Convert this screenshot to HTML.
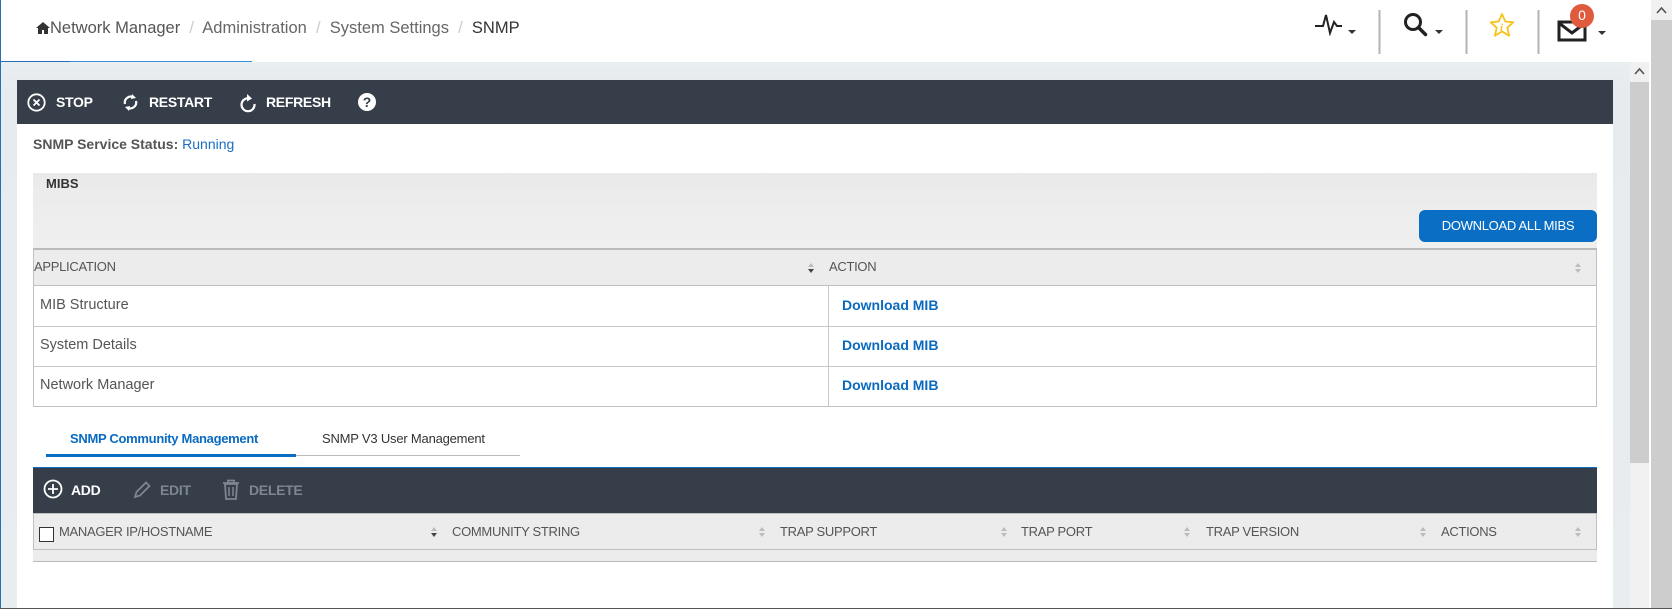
<!DOCTYPE html>
<html><head><meta charset="utf-8"><style>
*{margin:0;padding:0;box-sizing:border-box}
body{width:1672px;height:609px;overflow:hidden;background:#fff;font-family:"Liberation Sans",sans-serif;position:relative;color:#555}
.a{position:absolute;white-space:nowrap}
.tb{color:#fff;font-weight:bold;font-size:14px;letter-spacing:-0.3px}
.th{font-size:13px;color:#555;letter-spacing:-0.3px}
.srt{position:absolute;width:7px;height:10px}
.srt:before{content:"";position:absolute;left:0;top:0;border-left:3.5px solid transparent;border-right:3.5px solid transparent;border-bottom:4px solid #bbb}
.srt:after{content:"";position:absolute;left:0;top:6px;border-left:3.5px solid transparent;border-right:3.5px solid transparent;border-top:4px solid #bbb}
.srt.d:after{border-top-color:#444}
.hl{position:absolute;left:33px;width:1564px;height:1px;background:#c8c8c8}
.dl{color:#0a6ac0;font-weight:bold;font-size:14px}
.rt{font-size:14.5px;color:#555}
</style></head><body>
<div class="a" style="left:0;top:0;width:1651px;height:61px;background:#fff"></div>
<div class="a" style="left:0;top:0;width:1px;height:609px;background:#2a6db8"></div>
<div class="a" style="left:0;top:61px;width:70px;height:1px;background:#2a6db8"></div>
<div class="a" style="left:70px;top:61px;width:182px;height:1px;background:#3d8fd8"></div>
<div class="a" style="left:36px;top:19px;font-size:16.5px;color:#666">
<svg width="14" height="12" viewBox="0 0 14 12" style="vertical-align:-1px"><path d="M7 0L0 6h2v6h4V8h2v4h4V6h2z" fill="#333"/></svg><span style="color:#555">Network Manager</span> <span style="color:#ccc">&nbsp;/&nbsp;</span> Administration <span style="color:#ccc">&nbsp;/&nbsp;</span> System Settings <span style="color:#ccc">&nbsp;/&nbsp;</span> <span style="color:#333">SNMP</span></div>
<svg class="a" style="left:1314px;top:12px" width="30" height="24" viewBox="0 0 30 24"><path d="M1 14h8l3-11 4 18 4-11 3 4h5" fill="none" stroke="#222" stroke-width="2"/></svg>
<div class="a" style="left:1348px;top:30px;border-left:4px solid transparent;border-right:4px solid transparent;border-top:4px solid #333"></div>
<div class="a" style="left:1378px;top:10px;width:3px;height:44px;background:linear-gradient(90deg,#eee,#aaa,#eee)"></div>
<svg class="a" style="left:1403px;top:12px" width="28" height="26" viewBox="0 0 28 26"><circle cx="10" cy="10" r="7.5" fill="none" stroke="#222" stroke-width="3"/><path d="M15.5 15.5l7 7" stroke="#222" stroke-width="3.5" stroke-linecap="round"/></svg>
<div class="a" style="left:1435px;top:30px;border-left:4px solid transparent;border-right:4px solid transparent;border-top:4px solid #333"></div>
<div class="a" style="left:1465px;top:10px;width:3px;height:44px;background:linear-gradient(90deg,#eee,#aaa,#eee)"></div>
<svg class="a" style="left:1489px;top:12px" width="26" height="28" viewBox="0 0 26 28"><path d="M13 2l3.3 7.5 8 .8-6 5.4 1.8 8L13 19.5 5.9 23.7l1.8-8-6-5.4 8-.8z" fill="none" stroke="#f7c21b" stroke-width="1.8" stroke-linejoin="round"/><text x="11" y="19" font-size="11" font-style="italic" font-weight="bold" fill="#f7c21b" font-family="Liberation Serif,serif">i</text></svg>
<div class="a" style="left:1537px;top:10px;width:3px;height:44px;background:linear-gradient(90deg,#eee,#aaa,#eee)"></div>
<svg class="a" style="left:1557px;top:19px" width="32" height="24" viewBox="0 0 32 24"><rect x="2" y="3" width="26" height="18" fill="none" stroke="#222" stroke-width="3"/><path d="M2 4l13 10 13-10" fill="none" stroke="#222" stroke-width="3"/></svg>
<div class="a" style="left:1570px;top:4px;width:24px;height:24px;border-radius:50%;background:#e05a3d;color:#fff;font-size:14px;text-align:center;line-height:22px">0</div>
<div class="a" style="left:1598px;top:31px;border-left:4px solid transparent;border-right:4px solid transparent;border-top:4px solid #333"></div>
<div class="a" style="left:1px;top:62px;width:1629px;height:547px;background:linear-gradient(#e9eef1,#e6ebef 30px,#e8edf0)"></div>
<div class="a" style="left:1630px;top:62px;width:19px;height:547px;background:#f0f0f0"></div>
<div class="a" style="left:1630px;top:82px;width:19px;height:381px;background:#cdcdcd"></div>
<svg class="a" style="left:1633px;top:66px" width="13" height="10"><path d="M2 8l4.5-5 4.5 5" fill="none" stroke="#555" stroke-width="1.6"/></svg>
<div class="a" style="left:1651px;top:0;width:21px;height:609px;background:#cdcdcd"></div>
<div class="a" style="left:1651px;top:0;width:21px;height:20px;background:#f0f0f0"></div>
<svg class="a" style="left:1655px;top:5px" width="13" height="10"><path d="M2 8l4.5-5 4.5 5" fill="none" stroke="#555" stroke-width="1.6"/></svg>
<div class="a" style="left:0;top:608px;width:1672px;height:1px;background:#555"></div>
<div class="a" style="left:17px;top:80px;width:1596px;height:528px;background:#fff"></div>
<div class="a" style="left:17px;top:80px;width:1596px;height:44px;background:#353e49"></div>
<svg class="a" style="left:27px;top:93px" width="19" height="19" viewBox="0 0 19 19"><circle cx="9.5" cy="9.5" r="8.2" fill="none" stroke="#fff" stroke-width="1.8"/><path d="M6.5 6.5l6 6M12.5 6.5l-6 6" stroke="#fff" stroke-width="1.8"/></svg>
<div class="a tb" style="left:56px;top:94px">STOP</div>
<svg class="a" style="left:122px;top:93px" width="17" height="19" viewBox="0 0 17 19"><path d="M3 11a6 6 0 0 1 9-6.5" fill="none" stroke="#fff" stroke-width="2.2"/><path d="M10 1l4 4-5 1z" fill="#fff"/><path d="M14 8a6 6 0 0 1-9 6.5" fill="none" stroke="#fff" stroke-width="2.2"/><path d="M7 18l-4-4 5-1z" fill="#fff"/></svg>
<div class="a tb" style="left:149px;top:94px">RESTART</div>
<svg class="a" style="left:239px;top:92px" width="18" height="21" viewBox="0 0 18 21"><path d="M11 6.5A6.5 6.5 0 1 0 15.5 12" fill="none" stroke="#fff" stroke-width="2.2"/><path d="M8 2l5 4.5-5 3z" fill="#fff"/></svg>
<div class="a tb" style="left:266px;top:94px">REFRESH</div>
<div class="a" style="left:358px;top:93px;width:18px;height:18px;border-radius:50%;background:#fff;color:#353e49;font-weight:bold;font-size:14px;text-align:center;line-height:18px">?</div>
<div class="a" style="left:33px;top:136px;font-size:14px"><b style="color:#555">SNMP Service Status:</b> <span style="color:#1a6fc4">Running</span></div>
<div class="a" style="left:33px;top:173px;width:1564px;height:75px;background:linear-gradient(#e9e9e9,#ececec 20px,#efefef)"></div>
<div class="a" style="left:46px;top:176px;font-size:13px;font-weight:bold;color:#333">MIBS</div>
<div class="a" style="left:1419px;top:210px;width:178px;height:32px;background:#0a6ec5;border-radius:6px;color:#fff;font-size:13px;text-align:center;line-height:32px;letter-spacing:-0.3px">DOWNLOAD ALL MIBS</div>
<div class="a" style="left:33px;top:248px;width:1564px;height:159px;background:#fff;border:1px solid #c0c0c0;border-top:none"></div>
<div class="a" style="left:33px;top:248px;width:1564px;height:38px;background:#ececec;border:1px solid #c0c0c0;border-top:2px solid #bbb"></div>
<div class="a th" style="left:34px;top:259px">APPLICATION</div>
<div class="srt d" style="left:808px;top:263px"></div>
<div class="a th" style="left:829px;top:259px">ACTION</div>
<div class="srt" style="left:1575px;top:263px"></div>
<div class="hl" style="top:326px"></div>
<div class="hl" style="top:366px"></div>
<div class="a" style="left:828px;top:286px;width:1px;height:120px;background:#c8c8c8"></div>
<div class="a rt" style="left:40px;top:297px">MIB Structure</div>
<div class="a rt" style="left:40px;top:337px">System Details</div>
<div class="a rt" style="left:40px;top:377px">Network Manager</div>
<div class="a dl" style="left:842px;top:297px">Download MIB</div>
<div class="a dl" style="left:842px;top:337px">Download MIB</div>
<div class="a dl" style="left:842px;top:377px">Download MIB</div>
<div class="a" style="left:70px;top:431px;font-size:13px;font-weight:bold;color:#0a6ac0;letter-spacing:-0.3px">SNMP Community Management</div>
<div class="a" style="left:322px;top:431px;font-size:13px;color:#333;letter-spacing:-0.2px">SNMP V3 User Management</div>
<div class="a" style="left:296px;top:455px;width:224px;height:1px;background:#bbb"></div>
<div class="a" style="left:46px;top:454px;width:250px;height:3px;background:#0a6ec5"></div>
<div class="a" style="left:33px;top:467px;width:1564px;height:46px;background:#353e49;border-top:1px solid #0a6ec5"></div>
<svg class="a" style="left:43px;top:479px" width="20" height="20" viewBox="0 0 20 20"><circle cx="10" cy="10" r="8.5" fill="none" stroke="#fff" stroke-width="1.8"/><path d="M10 5v10M5 10h10" stroke="#fff" stroke-width="1.8"/></svg>
<div class="a tb" style="left:71px;top:482px">ADD</div>
<svg class="a" style="left:133px;top:479px" width="19" height="20" viewBox="0 0 19 20"><path d="M2 18l1.5-5L13 3.5l3.5 3.5L7 16.5z" fill="none" stroke="#7e868f" stroke-width="1.8"/></svg>
<div class="a tb" style="left:160px;top:482px;color:#7e868f">EDIT</div>
<svg class="a" style="left:222px;top:479px" width="18" height="21" viewBox="0 0 18 21"><path d="M1 4h16M6 4V1.5h6V4M3 5l1 15h10l1-15z" fill="none" stroke="#7e868f" stroke-width="1.8"/><path d="M7 8v9M11 8v9" stroke="#7e868f" stroke-width="1.5"/></svg>
<div class="a tb" style="left:249px;top:482px;color:#7e868f">DELETE</div>
<div class="a" style="left:33px;top:513px;width:1564px;height:37px;background:#ececec;border:1px solid #c0c0c0"></div>
<div class="a" style="left:39px;top:527px;width:15px;height:15px;border:1px solid #333;background:#fff"></div>
<div class="a th" style="left:59px;top:524px">MANAGER IP/HOSTNAME</div>
<div class="srt d" style="left:431px;top:527px"></div>
<div class="a th" style="left:452px;top:524px">COMMUNITY STRING</div>
<div class="srt" style="left:759px;top:527px"></div>
<div class="a th" style="left:780px;top:524px">TRAP SUPPORT</div>
<div class="srt" style="left:1001px;top:527px"></div>
<div class="a th" style="left:1021px;top:524px">TRAP PORT</div>
<div class="srt" style="left:1184px;top:527px"></div>
<div class="a th" style="left:1206px;top:524px">TRAP VERSION</div>
<div class="srt" style="left:1420px;top:527px"></div>
<div class="a th" style="left:1441px;top:524px">ACTIONS</div>
<div class="srt" style="left:1575px;top:527px"></div>
<div class="a" style="left:33px;top:550px;width:1564px;height:12px;background:#ececec;border-bottom:1px solid #bbb"></div>
</body></html>
